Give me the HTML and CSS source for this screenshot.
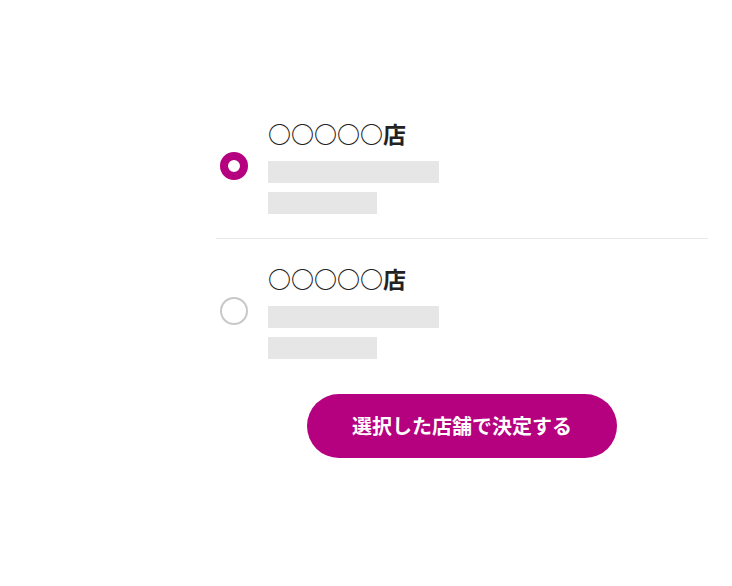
FILE: index.html
```html
<!DOCTYPE html>
<html lang="ja">
<head>
<meta charset="utf-8">
<title>店舗選択</title>
<link rel="stylesheet" href="styles.css">
</head>
<body>
<div class="page">
  <div class="panel">
    <ul class="store-list">
      <li class="store">
        <span class="radio radio-on"></span>
        <div class="store-body">
          <div class="store-name">○○○○○店</div>
          <span class="bar bar-long"></span>
          <span class="bar bar-short"></span>
        </div>
      </li>
      <li class="store">
        <span class="radio"></span>
        <div class="store-body">
          <div class="store-name">○○○○○店</div>
          <span class="bar bar-long"></span>
          <span class="bar bar-short"></span>
        </div>
      </li>
    </ul>
    <button class="submit" type="button">選択した店舗で決定する</button>
  </div>
</div>
</body>
</html>
```
FILE: styles.css
```css
html, body {
  margin: 0;
  padding: 0;
  background: #ffffff;
}
body {
  font-family: "Noto Sans CJK JP", "Noto Sans", sans-serif;
  color: #222222;
}
.page {
  padding: 94px 24px 0 216px;
}
.panel {
  width: 492px;
}
.store-list {
  list-style: none;
  margin: 0;
  padding: 0;
}
.store {
  display: flex;
  align-items: center;
  gap: 20px;
  padding: 23px 0 24px 4px;
}
.store + .store {
  border-top: 1px solid #e8e8e8;
}
.radio {
  flex: none;
  box-sizing: border-box;
  width: 28px;
  height: 28px;
  border-radius: 50%;
  border: 2px solid #c8c8c8;
  background: #ffffff;
}
.radio-on {
  border: 8px solid #b5007f;
}
.store-body {
  display: flex;
  flex-direction: column;
}
.store-name {
  font-size: 23px;
  line-height: 33px;
  font-weight: 700;
  color: #222222;
}
.bar {
  display: block;
  height: 22px;
  background: #e6e6e6;
}
.bar-long {
  width: 171px;
  margin-top: 11px;
}
.bar-short {
  width: 109px;
  margin-top: 9px;
}
.submit {
  display: block;
  margin: 11px auto 0;
  width: 310px;
  height: 64px;
  border: none;
  border-radius: 32px;
  background: #b5007f;
  color: #ffffff;
  font-family: "Noto Sans CJK JP", "Noto Sans", sans-serif;
  font-size: 20px;
  font-weight: 700;
  line-height: 1;
  padding: 0;
}
```
